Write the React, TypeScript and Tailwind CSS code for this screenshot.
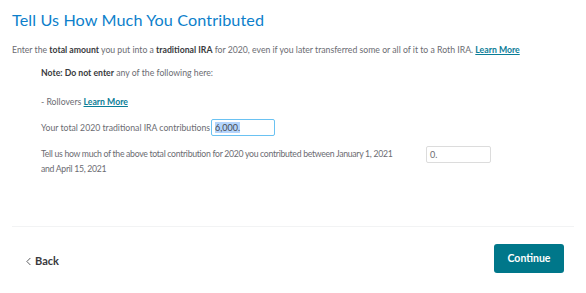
import { ChevronLeft } from "lucide-react";

function App() {
  return (
    <div className="w-[586px] h-[293px] bg-white font-['Lato',sans-serif] text-[#6b6c72] overflow-hidden">
      <div className="px-3 pt-[8px]">
        <h1 className="text-[16.2px] leading-[24px] text-[#0d7fcb] font-normal tracking-[0.1px]">
          Tell Us How Much You Contributed
        </h1>
        <p className="mt-[12px] text-[8.7px] leading-[12px]">
          Enter the <b className="text-[#393a3d]">total amount</b> you put into a{" "}
          <b className="text-[#393a3d]">traditional IRA</b> for 2020, even if you later
          transferred some or all of it to a Roth IRA.{" "}
          <a className="text-[#0b7d97] font-bold underline">Learn More</a>
        </p>
        <div className="pl-[29px] text-[8.7px]">
          <p className="mt-[11px] leading-[12px]">
            <b className="text-[#393a3d]">Note: Do not enter</b> any of the following here:
          </p>
          <p className="mt-[17px] leading-[12px]">
            - Rollovers <a className="text-[#0b7d97] font-bold underline">Learn More</a>
          </p>
          <div className="mt-[11px] flex items-center gap-[1px]">
            <span className="leading-[12px]">Your total 2020 traditional IRA contributions</span>
            <div className="w-[64px] h-[17px] border border-[#6ac2f2] rounded-[2px] flex items-center px-[3px]">
              <span className="bg-[#b3d4fc] text-[#4a4b50] text-[9px] leading-[11px]">6,000.</span>
            </div>
          </div>
          <div className="mt-[11px] flex items-start">
            <div className="w-[372px] shrink-0 leading-[14.5px] tracking-[-0.3px]">
              <div className="whitespace-nowrap">
                Tell us how much of the above total contribution for 2020 you contributed between January 1, 2021
              </div>
              <div>and April 15, 2021</div>
            </div>
            <div className="ml-[13px] w-[65px] h-[17px] shrink-0 border border-[#dcdcdc] rounded-[2px] flex items-center px-[3px] text-[9px] -mt-[1px]">
              0.
            </div>
          </div>
        </div>
      </div>
      <div className="mx-3 mt-[50px] border-t border-[#f2f3f4]" />
      <div className="flex items-center justify-between pl-[23px] pr-[22px] mt-[17px]">
        <button className="flex items-center text-[#393a3d] text-[11px] font-bold mt-[6px]">
          <ChevronLeft className="w-[13px] h-[13px] -ml-[1px]" strokeWidth={1.5} />
          Back
        </button>
        <button className="w-[70px] h-[29px] bg-[#00778a] rounded-[3px] text-white text-[10.5px] font-bold">
          Continue
        </button>
      </div>
    </div>
  );
}

export default App;
